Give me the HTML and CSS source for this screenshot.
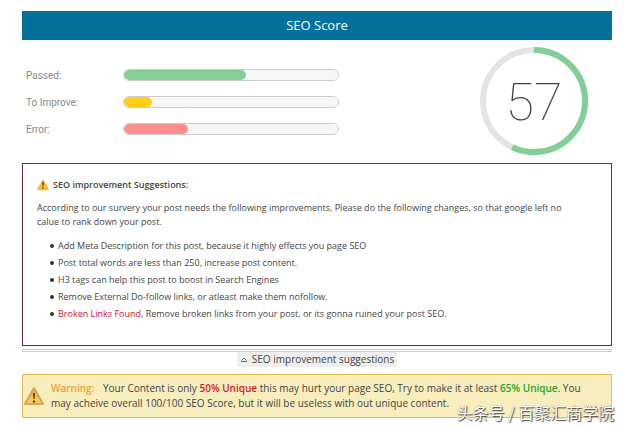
FILE: index.html
```html
<!DOCTYPE html>
<html lang="en">
<head>
    <meta charset="UTF-8">
    <meta name="viewport" content="width=device-width, initial-scale=1.0">
    <title>SEO Score</title>
    <link rel="stylesheet" href="styles.css">
</head>
<body>
    <h1>SEO Score</h1>

    <div class="score">
        <div class="bars">
            <label for="passed">Passed:</label>
            <progress id="passed" class="passed" value="57" max="100"></progress>
            <label for="improve">To Improve:</label>
            <progress id="improve" class="improve" value="13" max="100"></progress>
            <label for="error">Error:</label>
            <progress id="error" class="error" value="30" max="100"></progress>
        </div>
        <div class="ring">
            <svg viewBox="0 0 108 108" aria-hidden="true">
                <circle cx="54" cy="54" r="51" fill="none" stroke="#e3e4e4" stroke-width="6"/>
                <circle cx="54" cy="54" r="51" fill="none" stroke="#82cf96" stroke-width="6" pathLength="100" stroke-dasharray="57 43" transform="rotate(-90 54 54)"/>
            </svg>
            <span class="number">57</span>
        </div>
    </div>

    <div class="suggestions">
        <h2>
            <svg class="small-icon" viewBox="0 0 24 22" aria-hidden="true">
                <path d="M12 3 L21 19 H3 Z" fill="#fdc93c" stroke="#f8bb3c" stroke-width="5" stroke-linejoin="round"/>
                <path d="M10.500 5 h3 l-.5 9 h-2 Z" fill="#4a3b16"/>
                <circle cx="12" cy="17" r="1.500" fill="#4a3b16"/>
            </svg>
            SEO improvement Suggestions:
        </h2>
        <p>According to our survery your post needs the following improvements, Please do the following changes, so that google left no calue to rank down your post.</p>
        <ul>
            <li>Add Meta Description for this post, because it highly effects you page SEO</li>
            <li>Post total words are less than 250, increase post content.</li>
            <li>H3 tags can help this post to boost in Search Engines</li>
            <li>Remove External Do-follow links, or atleast make them nofollow.</li>
            <li><a href="#">Broken Links Found</a>, Remove broken links from your post, or its gonna ruined your post SEO.</li>
        </ul>
    </div>

    <div class="toggle">
        <button type="button">
            <svg viewBox="0 0 8 8" aria-hidden="true">
                <path d="M1.500 4.500 L4 2 L6.500 4.500 M1 5.500 H7" fill="none" stroke="#666"/>
            </svg>
            SEO improvement suggestions
        </button>
    </div>

    <div class="warning">
        <svg viewBox="0 0 22 20" aria-hidden="true">
            <defs>
                <linearGradient id="amber" x1="0" y1="0" x2="0" y2="1">
                    <stop offset="0" stop-color="#f6a52c"/>
                    <stop offset="1" stop-color="#fbd45c"/>
                </linearGradient>
            </defs>
            <path d="M11 2 L20 18 H2 Z" fill="url(#amber)" stroke="#d3a764" stroke-width="2" stroke-linejoin="round"/>
            <path d="M10 7 h2 l-.4 6 h-1.200 Z" fill="#53431f"/>
            <circle cx="11" cy="15.500" r="1.200" fill="#53431f"/>
        </svg>
        <p><strong class="label">Warning:</strong> Your Content is only <strong class="bad">50% Unique</strong> this may hurt your page SEO, Try to make it at least <strong class="good">65% Unique</strong>. You may acheive overall 100/100 SEO Score, but it will be useless with out unique content.</p>
    </div>

    <div class="watermark" lang="zh">头条号 / 百聚汇商学院</div>
</body>
</html>
```
FILE: styles.css
```css
* {
    box-sizing: border-box;
}
body {
    position: relative;
    font-family: "Open Sans", "Noto Sans CJK SC", sans-serif;
    font-size: 10px;
    margin: 0;
    padding: 11px 12px 9px 22px;
    background-color: white;
    color: #444;
}
h1 {
    margin: 0;
    background-color: #03719c;
    color: white;
    font-size: 13px;
    font-weight: normal;
    line-height: 29px;
    text-align: center;
}
.score {
    display: flex;
    justify-content: space-between;
    align-items: center;
    padding: 7px 24px 8px 4px;
}
.bars {
    display: grid;
    grid-template-columns: 97px 216px;
    grid-auto-rows: 27px;
    align-items: center;
    padding-top: 2px;
}
.bars label {
    font-family: Roboto, sans-serif;
    color: #888;
    padding-top: 1px;
}
progress {
    appearance: none;
    width: 100%;
    height: 12px;
    border: 1px solid #ccc;
    border-radius: 6px;
    background-color: #f5f6f8;
    overflow: hidden;
}
progress::-webkit-progress-bar {
    background-color: #f5f6f8;
}
progress::-webkit-progress-value {
    border-radius: 5px;
    background-color: #84cf98;
}
.improve::-webkit-progress-value {
    background-color: #fdd017;
}
.error::-webkit-progress-value {
    background-color: #fd8f8e;
}
.ring {
    display: grid;
    place-items: center;
    width: 108px;
    height: 108px;
}
.ring svg, .number {
    grid-area: 1 / 1;
}
.number {
    padding-top: 3px;
    font-family: Roboto, sans-serif;
    font-size: 52px;
    font-weight: 100;
    line-height: 52px;
}
.suggestions {
    border: 1px solid #6b2c38;
    padding: 14px;
    font-size: 9px;
}
.suggestions h2 {
    display: flex;
    align-items: center;
    gap: 4px;
    margin: 0 0 9px;
    font-size: 9px;
    font-weight: 600;
    line-height: 14px;
}
.small-icon {
    width: 12px;
    height: 12px;
}
.suggestions p {
    margin: 0 0 8px;
    padding-right: 30px;
    line-height: 14px;
}
.suggestions ul {
    margin: 0;
    padding: 0 0 9px 13px;
    line-height: 17px;
    list-style: none;
}
.suggestions li {
    display: flex;
    align-items: center;
}
.suggestions li::before {
    content: "";
    width: 4px;
    height: 4px;
    margin-right: 4px;
    border-radius: 50%;
    background-color: #333;
}
.suggestions a {
    color: #cb1230;
    text-decoration: none;
}
.toggle {
    margin: 3px 0 7px;
    border-top: 3px double #d0c8ca;
    text-align: center;
}
.toggle button {
    display: inline-flex;
    align-items: center;
    gap: 4px;
    padding: 0 3px;
    border: none;
    border-radius: 2px;
    background-color: #eee;
    color: #444;
    font-family: inherit;
    font-size: 10px;
    line-height: 15px;
}
.toggle svg {
    width: 8px;
    height: 8px;
}
.warning {
    display: flex;
    align-items: center;
    gap: 6px;
    padding: 6px 22px 6px 0;
    border: 1px solid #e5bd4c;
    background-color: #f7edbd;
    line-height: 15px;
}
.warning svg {
    flex: none;
    width: 22px;
    height: 20px;
}
.warning p {
    margin: 0;
}
.warning strong {
    font-weight: 600;
}
.warning .label {
    margin-right: 6px;
    color: #eba237;
}
.warning .bad {
    color: #d8192b;
}
.warning .good {
    color: #2ba51c;
}
.watermark {
    position: absolute;
    right: 10px;
    bottom: 3px;
    color: white;
    font-family: "Noto Sans CJK SC", sans-serif;
    font-size: 16px;
    line-height: 24px;
    white-space: nowrap;
    text-shadow: 1px 1px 1px #444, 0 0 1px #777;
}
```
